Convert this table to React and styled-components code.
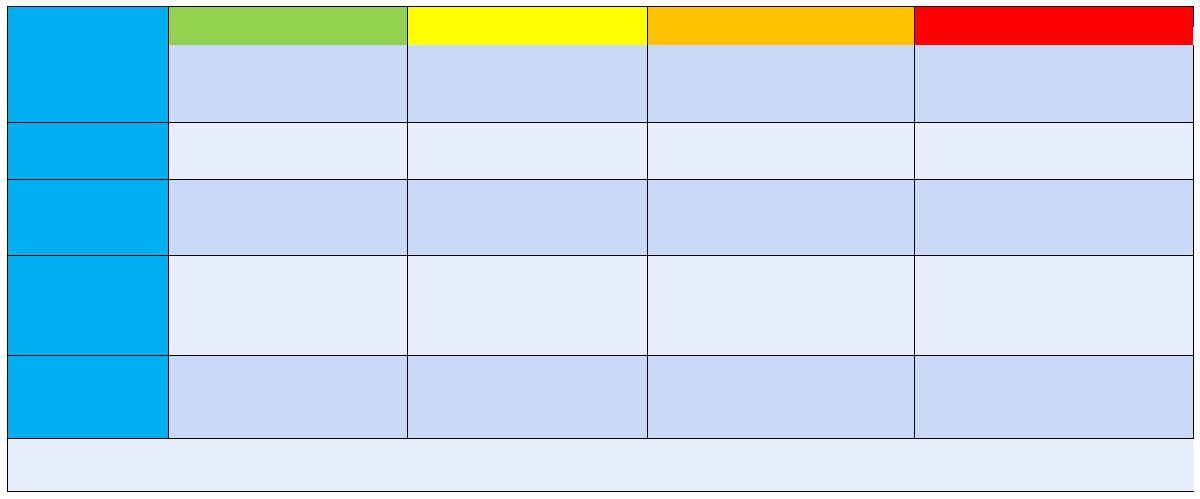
import React from "react";
import styled, { createGlobalStyle } from "styled-components";

const GlobalStyle = createGlobalStyle`
  html, body {
    margin: 0;
    padding: 0;
    background: #ffffff;
    font-family: "Liberation Sans", Arial, sans-serif;
  }
`;

const COLS = [161, 239, 240, 267, 279];
const ROWS = [38, 78, 57, 76, 100, 83, 53];

const levels = ["#92d050", "#ffff00", "#ffc000", "#ff0000"];
const bodyRows = ["dark", "light", "dark", "light", "dark"];

const tones = {
  dark: "#c9daf8",
  light: "#e8eefc",
  label: "#00b0f0",
};

const Page = styled.div`
  padding: 6px 0 0 7px;
`;

const Sheet = styled.div`
  display: grid;
  grid-template-columns: ${COLS.map((c) => `${c}px`).join(" ")};
  grid-template-rows: ${ROWS.map((r) => `${r}px`).join(" ")};
  width: max-content;
  border-top: 1px solid #000;
  border-left: 1px solid #000;
`;

const Cell = styled.div`
  box-sizing: border-box;
  background: ${(p) => tones[p.$tone] || p.$tone};
  border-right: ${(p) => (p.$noRight ? "none" : "1px solid #000")};
  border-bottom: ${(p) => (p.$noBottom ? "none" : "1px solid #000")};
  grid-row: ${(p) => (p.$rows ? `span ${p.$rows}` : "auto")};
  grid-column: ${(p) => (p.$cols ? `span ${p.$cols}` : "auto")};
`;

const LevelCell = styled(Cell)`
  ${(p) =>
    p.$last &&
    `
    border-right: none;
    background:
      linear-gradient(#000, #000) right top / 1px 20px no-repeat,
      linear-gradient(${p.$tone}, ${p.$tone}) left top / calc(100% - 1px) 100% no-repeat,
      #ffffff;
  `}
`;

export default function App() {
  return (
    <>
      <GlobalStyle />
      <Page>
        <Sheet>
          <Cell $tone="label" $rows={2} />
          {levels.map((c, i) => (
            <LevelCell key={c} $tone={c} $noBottom $last={i === levels.length - 1} />
          ))}
          {bodyRows.map((tone, r) => (
            <React.Fragment key={r}>
              {r > 0 && <Cell $tone="label" />}
              {levels.map((_, i) => (
                <Cell key={i} $tone={tone} />
              ))}
            </React.Fragment>
          ))}
          <Cell $tone="light" $cols={5} $noRight />
        </Sheet>
      </Page>
    </>
  );
}
